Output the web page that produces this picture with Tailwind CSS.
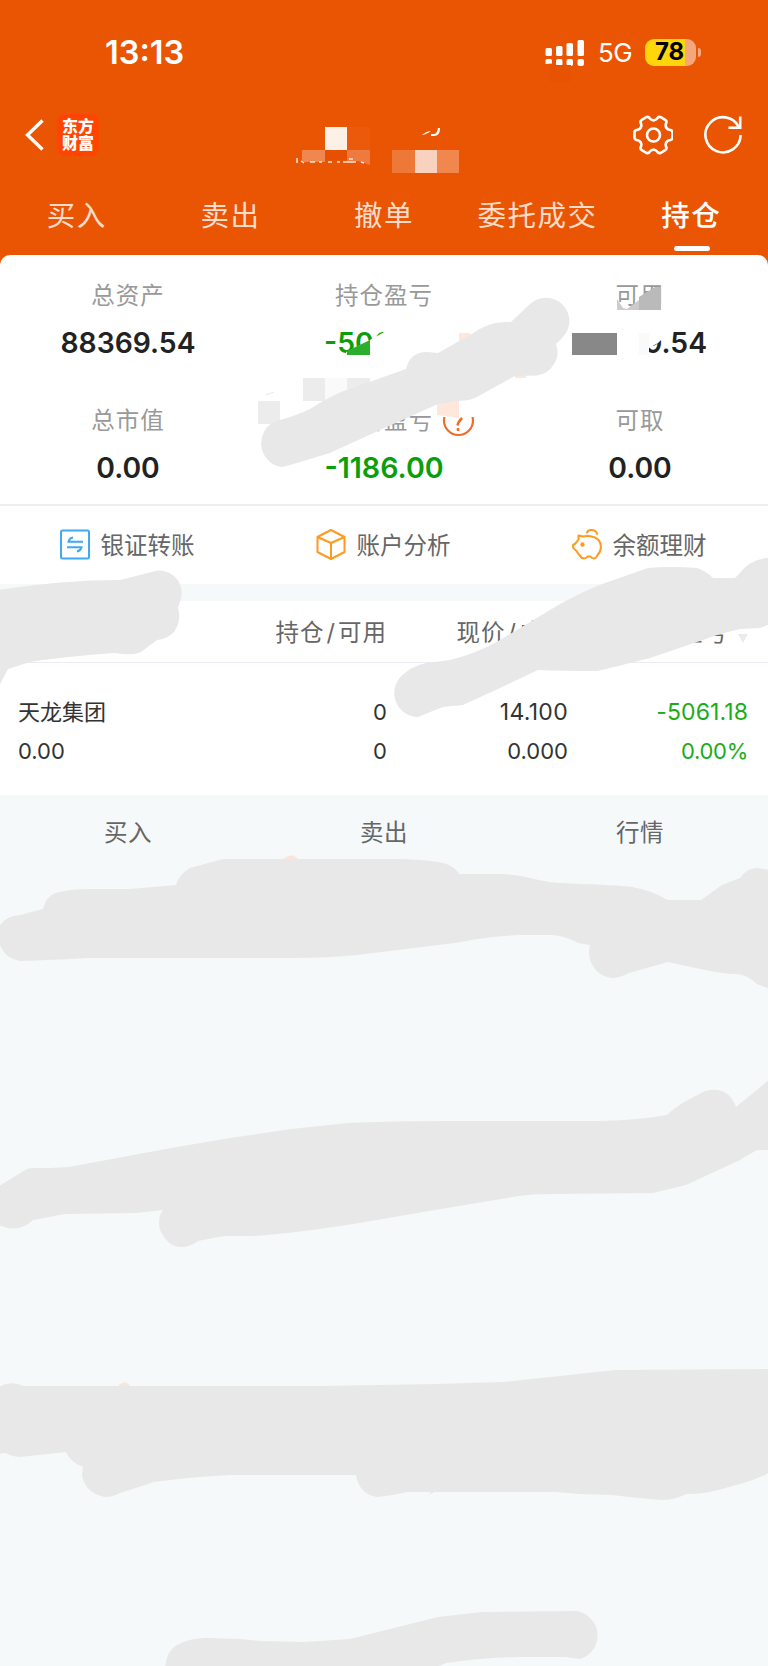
<!DOCTYPE html>
<html lang="zh-CN">
<head>
    <meta charset="UTF-8">
    <meta name="viewport" content="width=device-width, initial-scale=1.0">
    <title>持仓</title>
    <script src="https://cdn.jsdelivr.net/npm/@tailwindcss/browser@4"></script>
    <style>
        body {
            font-family: Inter, 'Noto Sans CJK SC', sans-serif;
        }
    </style>
</head>
<body class="bg-[#f5f9fa]">
    <div class="relative w-[768px] h-[1666px] overflow-hidden flex flex-col bg-[#f5f9fa] text-[#222]">

        <!-- Header -->
        <header class="h-[270px] shrink-0 bg-[#ea5504] text-white flex flex-col">
            <div class="h-[104px] pl-[105px] pr-[67px] flex items-center justify-between">
                <span class="text-[32.5px] font-semibold leading-none pt-[2px]">13:13</span>
                <div class="flex items-center">
                    <svg class="w-10 h-[27px]" viewBox="0 0 40 27" fill="#fff">
                        <rect x="0.5" y="9" width="6.5" height="8" rx="1.6"/>
                        <rect x="11" y="7" width="6.5" height="10" rx="1.6"/>
                        <rect x="21.5" y="4" width="6.5" height="13" rx="1.6"/>
                        <rect x="32.5" y="1" width="6.5" height="16" rx="1.6"/>
                        <path d="M2 20h3.500q1.500 0 1.500 1.500v3L.5 25v-3.500q0-1.500 1.500-1.500Z"/>
                        <rect x="11" y="20" width="6.5" height="7" rx="2"/>
                        <rect x="21.5" y="20" width="6.5" height="7" rx="2"/>
                        <rect x="32.5" y="20" width="6.5" height="7" rx="2"/>
                    </svg>
                    <span class="ml-[13px] w-[35px] text-[26px] leading-8 tracking-[-0.5px] pt-[2px]">5G</span>
                    <div class="ml-[12px] w-[51px] h-[27px] rounded-[9px] bg-[linear-gradient(90deg,#ffd60a_78%,#f4a67c_78%)] text-black flex items-center pl-[10px]"><span class="text-[24px] font-bold leading-8">78</span></div>
                    <div class="ml-[2px] w-[3px] h-[9px] rounded-r-full bg-[#f4a67c]"></div>
                </div>
            </div>
            <div class="h-[62px] pl-[25px] pr-[25px] flex items-center">
                <svg class="w-5 h-8" viewBox="0 0 20 32" fill="none" stroke="#fff" stroke-width="3.4"><path d="M17.500 1.500 2.500 16l15 14.500"/></svg>
                <div class="ml-3 w-[42px] h-[42px] rounded-[8px] bg-[#ff4400] flex items-center justify-center text-[16px] leading-[17px] font-black text-center">东方<br>财富</div>
                <svg class="ml-auto w-10 h-10" viewBox="-20.5 -20 40 40" fill="none" stroke="#fff" stroke-width="2.6" stroke-linecap="round">
                    <path id="tooth" d="M12.800-7.400C14-5.200 13.800-5.600 17-5Q19 -4.500 19-2.600V2.600Q19 4.500 17 5C13.800 5.600 14 5.200 12.800 7.400"/>
                    <use href="#tooth" transform="rotate(60)"/>
                    <use href="#tooth" transform="rotate(120)"/>
                    <use href="#tooth" transform="rotate(180)"/>
                    <use href="#tooth" transform="rotate(240)"/>
                    <use href="#tooth" transform="rotate(300)"/>
                    <circle r="6.500"/>
                </svg>
                <svg class="ml-[30px] w-10 h-10" viewBox="-20 -20 40 40" fill="none" stroke="#fff" stroke-width="2.6">
                    <path d="M17.600 0A17.600 17.600 0 1 1 15.800-8M17.200-18.500V-7.200H5.500"/>
                </svg>
            </div>
            <nav class="h-[100px] grid grid-cols-5 text-center text-[28.5px] tracking-[1.500px] leading-[99px] text-[#fcdccb]">
                <span>买入</span>
                <span>卖出</span>
                <span>撤单</span>
                <span class="whitespace-nowrap">委托成交</span>
                <span class="relative text-white font-medium">持仓<i class="absolute left-[60px] top-[80px] w-9 h-[5px] rounded-full bg-white"></i></span>
            </nav>
        </header>

        <!-- Account summary -->
        <section class="-mt-[15px] shrink-0 h-[251px] rounded-t-[10px] bg-white border-b-2 border-[#eee] grid grid-cols-3 grid-rows-[125px_124px] text-center">
            <div>
                <p class="pt-[25px] leading-8 text-[23.5px] tracking-[1px] text-[#999]">总资产</p>
                <p class="pt-[15px] leading-8 text-[28.3px] font-semibold">88369.54</p>
            </div>
            <div>
                <p class="pt-[25px] leading-8 text-[23.5px] tracking-[1px] text-[#999]">持仓盈亏</p>
                <p class="pt-[15px] leading-8 text-[28.3px] font-semibold text-[#0a9f0a] w-[120px] mx-auto text-left">-506</p>
            </div>
            <div>
                <p class="pt-[25px] leading-8 text-[23.5px] tracking-[1px] text-[#999]">可用</p>
                <p class="pt-[15px] leading-8 text-[28.3px] font-semibold w-[134px] mx-auto text-right">9.54</p>
            </div>
            <div>
                <p class="pt-[25px] leading-8 text-[23.5px] tracking-[1px] text-[#999]">总市值</p>
                <p class="pt-[15px] leading-8 text-[28.3px] font-semibold">0.00</p>
            </div>
            <div>
                <p class="pt-[25px] leading-8 text-[23.5px] tracking-[1px] text-[#999]">当日盈亏</p>
                <p class="pt-[15px] leading-8 text-[28.6px] font-semibold text-[#0a9f0a]">-1186.00</p>
            </div>
            <div>
                <p class="pt-[25px] leading-8 text-[23.5px] tracking-[1px] text-[#999]">可取</p>
                <p class="pt-[15px] leading-8 text-[28.3px] font-semibold">0.00</p>
            </div>
        </section>

        <!-- Shortcuts -->
        <section class="h-[78px] shrink-0 bg-white grid grid-cols-3 text-[23.500px] leading-8 text-[#666]">
            <div class="flex items-center justify-center gap-[11px] pr-[2px]">
                <svg class="w-[30px] h-[31px] -mt-[2px]" viewBox="0 0 30 31" fill="none" stroke="#3fa9f5" stroke-width="2">
                    <rect x="1" y="1.500" width="28" height="28" rx="1.500"/>
                    <path d="M23 12.700H8.500Q9.500 9 13 8.500M7 18.300h14.500Q20.500 22 17 22.500"/>
                </svg>
                <span class="pt-[2px]">银证转账</span>
            </div>
            <div class="flex items-center justify-center gap-[11px] pr-[2px]">
                <svg class="w-[30px] h-[31px] -mt-[2px]" viewBox="0 0 30 31" fill="none" stroke="#ff9a1f" stroke-width="2" stroke-linejoin="round">
                    <path d="M15 1 28.500 8v15L15 30 1.500 23V8ZM1.500 8 15 14l13.500-6M15 14v16"/>
                </svg>
                <span class="pt-[2px]">账户分析</span>
            </div>
            <div class="flex items-center justify-center gap-[11px] pr-[2px]">
                <svg class="w-[30px] h-[31px] -mt-[2px]" viewBox="0 0 30 31" fill="none" stroke="#ff9a1f" stroke-width="2" stroke-linejoin="round" stroke-linecap="round">
                    <path d="M6.500 6.500 11 7.500C15 6.300 22 6.800 26 10.500c4 4 4 11-.5 15.500-1 2.500-2 3.500-3.500 3.500s-2.500-.5-3.500-2h-3c-1 1.500-2 2-3.500 2s-3-.8-4-3c-2-1-2.500-4-4.500-5.500C1 19.500.5 18 1 16c3-1 3.500-3 5.500-5.500Z"/>
                    <path d="M15 3.500c1-3.500 9-3.500 10 1.500"/>
                    <circle cx="10.500" cy="15.500" r="1.200" fill="#ff9a1f"/>
                </svg>
                <span class="pt-[2px]">余额理财</span>
            </div>
        </section>

        <!-- Holdings -->
        <section class="mt-[17px] shrink-0 bg-white">
            <div class="h-[62px] pt-[3px] border-b border-[#e9ecf2] pl-[18px] pr-[20px] grid grid-cols-[188px_181px_181px_1fr] items-center text-right text-[23.5px] tracking-[1px] text-[#666]">
                <span></span>
                <span>持仓<span class="px-[2px]">/</span>可用</span>
                <span>现价<span class="px-[2px]">/</span>成本</span>
                <span class="pr-[20px]">持仓盈亏</span>
            </div>
            <div class="h-[132px] pt-[30px] pl-[18px] pr-[20px] grid grid-cols-[188px_181px_181px_1fr] auto-rows-[39px] items-center text-right text-[22px] text-[#333]">
                <span class="text-left">天龙集团</span>
                <span>0</span>
                <span class="text-[23px] tracking-[0.3px]">14.100</span>
                <span class="text-[23px] tracking-[0.1px] text-[#1aad19]">-5061.18</span>
                <span class="text-left">0.00</span>
                <span>0</span>
                <span>0.000</span>
                <span class="tracking-[-0.3px] text-[#1aad19]">0.00%</span>
            </div>
        </section>
        <div class="h-[76px] shrink-0 grid grid-cols-3 text-center leading-[76px] text-[23.5px] tracking-[0.5px] text-[#666]">
            <span>买入</span>
            <span>卖出</span>
            <span>行情</span>
        </div>

        <!-- Redaction layer -->
        <svg class="absolute inset-0 w-[768px] h-[1666px]" viewBox="0 0 768 1666">
            <!-- title mosaic -->
            <path fill="#fdf0e7" d="M325 127h22v23h-22Z"/>
            <path fill="#eb590a" d="M347 127h23v23h-23Z"/>
            <path fill="#f08650" d="M302 150h23v12h-23Z"/>
            <path fill="#ee7a40" d="M347 150h23v15l-12-4-11 1Z"/>
            <path fill="#e65000" d="M325 150h22v10h-22Z"/>
            <path fill="none" stroke="#fde5d8" stroke-width="1.500" d="M297 158v5M301 161l3 2M310 162h5M319 162h3M328 162h4M337 162h3M343 162h13M349 159h4M361 162l3 1"/>
            <path fill="#fff" d="M422 135q5-4 9-4l-3 2-5 2ZM438 128h2q0 8-6 8h-3v-2h3q3 0 4-6Z"/>
            <path fill="#ee7838" d="M392 150h23v23h-23Z"/>
            <path fill="#f8d2be" d="M415 150h22v23h-22Z"/>
            <path fill="#f2864f" d="M437 150h22v23h-22Z"/>
            <path fill="#e85203" d="M549 65h22v17h-22Z"/>
            <!-- summary mosaic -->
            <path fill="#fff" d="M346 352 370 340 377 336 386 331 450 328V360H346Z"/>
            <path fill="#2bae2b" d="M347 351 370 340V355H347Z"/>
            <path fill="#bababa" d="M639 297 655 287h6v23h-22Z"/>
            <path fill="#ccc" d="M617 299l6 9 4 1 12-9v10h-22Z"/>
            <path fill="#888" d="M572 333h45v22h-45Z"/>
            <path fill="#fff" d="M640 328h24v9l-6 6-9 5v8h-9Z"/>
            <path fill="#fafafa" d="M639 333h10v22h-10Z"/>
            <path fill="#ececec" d="M303 378h22v23h-22ZM347 378h23v23h-23ZM258 401h22v23h-22Z"/>
            <path fill="#fafafa" d="M325 378h22v23h-22Z"/>
            <path fill="none" stroke="#e8e8e8" d="m266 395 8-3"/>
            <path fill="#fff" d="M340 404h100v11H340Z"/>
            <circle cx="458.500" cy="420.500" r="14.500" fill="none" stroke="#f26b2a" stroke-width="2.2"/>
            <path fill="none" stroke="#f26b2a" stroke-width="2.500" d="M462 418q-4 4-4.500 7.500M458 428v3"/>
            <path fill="#fff" d="M442 400h34v17h-34Z"/>
            <path fill="#ffe7dc" d="M459 333h11v22h-11ZM437 396h22v22l-22-3ZM515 370h11v8h-11Z"/>
            <path fill="#ebebeb" d="m738 634 10 0-5 9Z"/>
            <path fill="#fae4dc" d="M282 860q10-9 17 0ZM117 1387q8-9 14 0Z"/>
            <path fill="#dcdfe0" d="m428 1495 5-4h3Z"/>
            <!-- strokes -->
            <g fill="#e8e8e8">
                <path d="M282 467A24 24 0 0 1 276 421Q293 417 310 409 325 399 341 392L406 369Q410 352 427 352L438 353 470 335Q488 322 505 322H511L530 304A22.700 22.700 0 1 1 562 338L556 344Q560 355 554 364 548 374 537 375.500L515 376 475 398Q468 401 456 401L438 404 380 430 330 453 290 465Z"/>
                <path d="M-2 590Q60 580 120 580L152 572A22 22 0 0 1 181 598L178 608Q182 620 174 632 167 639 157 640L141 652Q133 656 115 653 60 657 30 662L8 669-2 688Z"/>
                <path d="M418 717A24 24 0 0 1 405 673Q416 663 435 662L450 660Q478 653 500 640L560 604Q590 588 605 583L648 568Q670 566 697 568 706 571 713 578L735 578 739 574 Q750 559 768 558H770V624L760 628 740 629Q718 634 700 641L650 658Q615 667 597 671 560 671 538 670L500 688 463 705 443 707Q430 712 418 717Z"/>
                <path d="M-1 927Q5 916 20 915L43 909Q46 896 56 893 70 889 86 889H130L176 885Q179 874 190 868L223 859H402Q430 860 443 863 455 866 459 874H500Q520 875 534 879 550 883 571 883.500 615 885 632 887 650 890 668 900H701L722 885 740 878Q747 868 757 868L770 870V989L757 984Q746 974 736 974 724 974 705 970L668 962 629 973Q620 978 612 978 596 976 590 960 588 952 590 945L578 943Q563 935 551 935H519Q485 937 455 943L357 955Q327 958 294 958H88Q50 960 20 961 5 959-1 943Z"/>
                <path d="M-1 1186 27 1169Q30 1168 34 1168L50 1168 69 1167 171 1148 230 1138 291 1129 348 1123Q390 1121 441 1121H602Q640 1120 667 1115 674 1108 686 1101L705 1091Q728 1085 736 1107L770 1079V1150H757Q750 1154 740 1160L686 1185 653 1193 553 1194Q530 1194 519 1196L441 1209 353 1224Q290 1234 252 1236H225Q212 1238 198 1241 190 1247 181 1247 168 1247 160 1230 157 1218 163 1210L136 1213 64 1214Q50 1217 33 1220 18 1234-1 1225Z"/>
                <path d="M-1 1387Q10 1380 24 1386H318L438 1384 502 1382 560 1376 615 1370 770 1369V1472Q757 1480 740 1484L718 1490Q705 1494 686 1494 675 1500 661 1500 635 1498 612 1495L580 1494 556 1492H407Q390 1496 377 1497 359 1494 356 1475H230Q190 1477 154 1482L120 1493Q113 1497 105 1497 85 1493 82 1475L83 1467Q70 1462 66 1452L20 1457Q10 1456 6 1453L-1 1454Z"/>
                <path d="M165 1668Q167 1650 177 1645 190 1638 206 1638L240 1639 260 1641 304 1642 350 1639 438 1617 482 1612 573 1611A24.500 24.500 0 0 1 580 1659L566 1657H519Q480 1658 446 1663L434 1668Z"/>
            </g>
        </svg>
    </div>
</body>
</html>
